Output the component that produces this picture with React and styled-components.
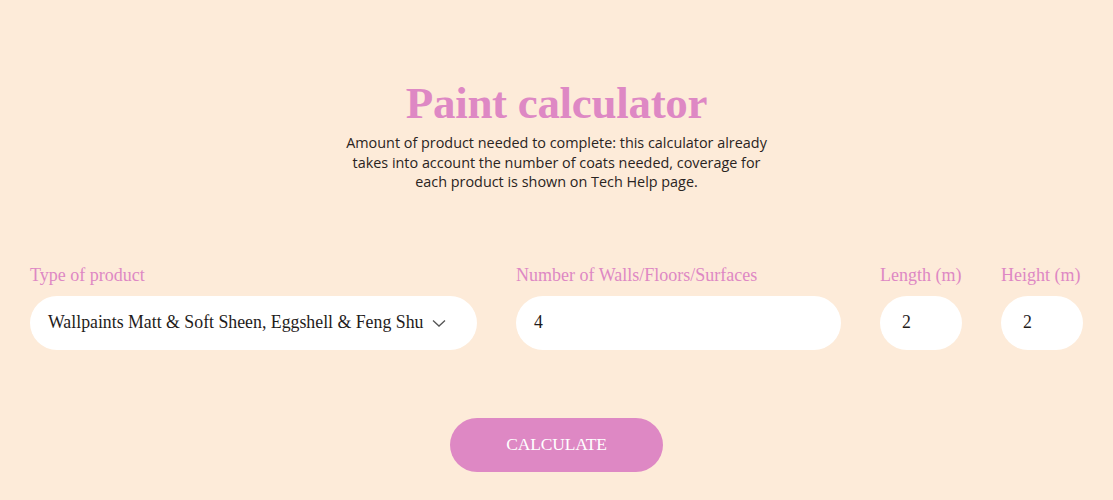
import React from "react";
import styled, { createGlobalStyle } from "styled-components";

const Global = createGlobalStyle`
  html, body { margin: 0; padding: 0; background: #fdebd9; }
  * { box-sizing: border-box; }
`;

const PINK = "#de88c4";
const SERIF = `"Liberation Serif", "DejaVu Serif", serif`;

const Page = styled.div`
  width: 1113px;
  height: 500px;
  background: #fdebd9;
  padding: 75px 30px 0;
  display: flex;
  flex-direction: column;
  align-items: center;
  overflow: hidden;
`;

const Title = styled.h1`
  margin: 0;
  font-family: ${SERIF};
  font-weight: 700;
  font-size: 45px;
  line-height: 56px;
  color: ${PINK};
  letter-spacing: -0.3px;
`;

const Intro = styled.p`
  margin: 2px 0 0;
  width: 440px;
  text-align: center;
  font-family: "Open Sans", "Noto Sans", sans-serif;
  font-size: 14.4px;
  line-height: 19.5px;
  color: #2a2422;
`;

const Form = styled.div`
  width: 100%;
  margin-top: 73px;
  display: grid;
  grid-template-columns: 447px 325px 82px 82px;
  column-gap: 39px;
`;

const Field = styled.div`
  display: flex;
  flex-direction: column;
  gap: 11px;
`;

const Label = styled.label`
  font-family: ${SERIF};
  font-size: 18px;
  line-height: 20px;
  color: ${PINK};
  white-space: nowrap;
`;

const Pill = styled.div`
  height: 54px;
  border-radius: 27px;
  background: #fff;
  display: flex;
  align-items: center;
  justify-content: space-between;
  padding: 0 ${(p) => (p.$compact ? "22px" : "18px")};
  font-family: ${SERIF};
  font-size: 17.8px;
  color: #1f1c1b;
`;

const Chevron = styled.svg`
  width: 16px;
  height: 16px;
  flex: none;
  margin-right: 12px;
`;

const Button = styled.button`
  margin-top: 68px;
  width: 213px;
  height: 54px;
  border: none;
  border-radius: 27px;
  background: ${PINK};
  color: #fff;
  font-family: ${SERIF};
  font-size: 17.5px;
  letter-spacing: -0.2px;
  cursor: pointer;
`;

export default function App() {
  return (
    <>
      <Global />
      <Page>
        <Title>Paint calculator</Title>
        <Intro>
          Amount of product needed to complete: this calculator already takes into account the
          number of coats needed, coverage for each product is shown on Tech Help page.
        </Intro>
        <Form>
          <Field>
            <Label>Type of product</Label>
            <Pill>
              <span>Wallpaints Matt &amp; Soft Sheen, Eggshell &amp; Feng Shu</span>
              <Chevron viewBox="0 0 16 16" fill="none" stroke="#555" strokeWidth="1.3">
                <path d="M2 5.5 L8 11 L14 5.5" />
              </Chevron>
            </Pill>
          </Field>
          <Field>
            <Label>Number of Walls/Floors/Surfaces</Label>
            <Pill>4</Pill>
          </Field>
          <Field>
            <Label>Length (m)</Label>
            <Pill $compact>2</Pill>
          </Field>
          <Field>
            <Label>Height (m)</Label>
            <Pill $compact>2</Pill>
          </Field>
        </Form>
        <Button>CALCULATE</Button>
      </Page>
    </>
  );
}
